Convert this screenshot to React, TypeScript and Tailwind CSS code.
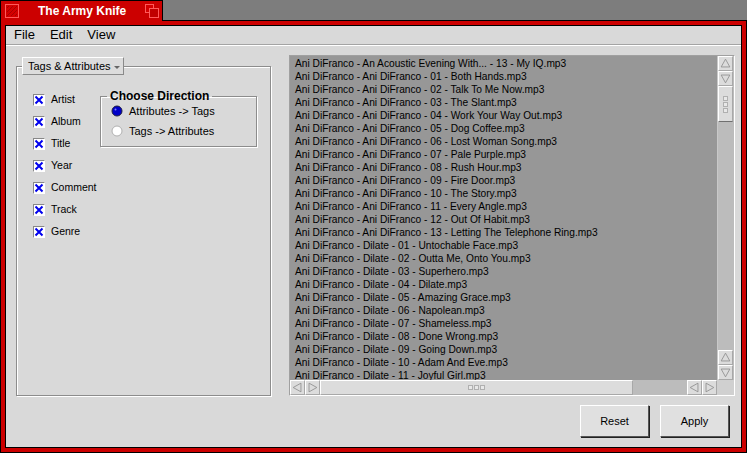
const tracks = [
  "Ani DiFranco - An Acoustic Evening With... - 13 - My IQ.mp3",
  "Ani DiFranco - Ani DiFranco - 01 - Both Hands.mp3",
  "Ani DiFranco - Ani DiFranco - 02 - Talk To Me Now.mp3",
  "Ani DiFranco - Ani DiFranco - 03 - The Slant.mp3",
  "Ani DiFranco - Ani DiFranco - 04 - Work Your Way Out.mp3",
  "Ani DiFranco - Ani DiFranco - 05 - Dog Coffee.mp3",
  "Ani DiFranco - Ani DiFranco - 06 - Lost Woman Song.mp3",
  "Ani DiFranco - Ani DiFranco - 07 - Pale Purple.mp3",
  "Ani DiFranco - Ani DiFranco - 08 - Rush Hour.mp3",
  "Ani DiFranco - Ani DiFranco - 09 - Fire Door.mp3",
  "Ani DiFranco - Ani DiFranco - 10 - The Story.mp3",
  "Ani DiFranco - Ani DiFranco - 11 - Every Angle.mp3",
  "Ani DiFranco - Ani DiFranco - 12 - Out Of Habit.mp3",
  "Ani DiFranco - Ani DiFranco - 13 - Letting The Telephone Ring.mp3",
  "Ani DiFranco - Dilate - 01 - Untochable Face.mp3",
  "Ani DiFranco - Dilate - 02 - Outta Me, Onto You.mp3",
  "Ani DiFranco - Dilate - 03 - Superhero.mp3",
  "Ani DiFranco - Dilate - 04 - Dilate.mp3",
  "Ani DiFranco - Dilate - 05 - Amazing Grace.mp3",
  "Ani DiFranco - Dilate - 06 - Napolean.mp3",
  "Ani DiFranco - Dilate - 07 - Shameless.mp3",
  "Ani DiFranco - Dilate - 08 - Done Wrong.mp3",
  "Ani DiFranco - Dilate - 09 - Going Down.mp3",
  "Ani DiFranco - Dilate - 10 - Adam And Eve.mp3",
  "Ani DiFranco - Dilate - 11 - Joyful Girl.mp3",
];

const fields = ["Artist", "Album", "Title", "Year", "Comment", "Track", "Genre"];

function CloseBox() {
  return (
    <svg width="14" height="14" viewBox="0 0 14 14">
      <rect x="0.5" y="0.5" width="13" height="13" fill="#d40000" stroke="#ff5a5a" />
      <path d="M2 12 L12 2 M2 8 L8 2 M6 12 L12 6 M2 4 L4 2 M10 12 L12 10" stroke="#a80000" strokeWidth="1" />
    </svg>
  );
}

function ZoomBox() {
  return (
    <svg width="14" height="14" viewBox="0 0 14 14">
      <rect x="0.5" y="0.5" width="8" height="8" fill="#d40000" stroke="#ff5a5a" />
      <rect x="4.5" y="4.5" width="9" height="9" fill="#c00000" stroke="#ff5a5a" />
    </svg>
  );
}

function Arrow({ dir }: { dir: "up" | "down" | "left" | "right" }) {
  const pts = {
    up: "7.5,2.5 2.5,11.5 12.5,11.5",
    down: "2.5,3.5 12.5,3.5 7.5,12.5",
    left: "2.5,7.5 11.5,2.5 11.5,12.5",
    right: "3.5,2.5 3.5,12.5 12.5,7.5",
  }[dir];
  return (
    <div className="flex h-[15px] w-[15px] items-center justify-center border border-t-white border-l-white border-r-[#a8a8a8] border-b-[#a8a8a8] bg-[#dcdcdc]">
      <svg width="15" height="15" viewBox="0 0 15 15">
        <polygon points={pts} fill="none" stroke="#909090" />
      </svg>
    </div>
  );
}

function Grip({ vertical }: { vertical?: boolean }) {
  return (
    <div className={vertical ? "flex flex-col gap-[1px]" : "flex gap-[1px]"}>
      {[0, 1, 2].map((i) => (
        <div key={i} className="h-[5px] w-[5px] border border-[#b0b0b0] bg-[#e8e8e8]" />
      ))}
    </div>
  );
}

function Check() {
  return (
    <div className="h-[12px] w-[12px] border border-t-[#888] border-l-[#888] border-r-white border-b-white bg-white">
      <svg width="10" height="10" viewBox="0 0 10 10">
        <path d="M1.5 1.5 L8.5 8.5 M8.5 1.5 L1.5 8.5" stroke="#0000ee" strokeWidth="2" />
      </svg>
    </div>
  );
}

function Radio({ on }: { on?: boolean }) {
  return (
    <svg width="12" height="12" viewBox="0 0 12 12">
      <circle cx="6" cy="6" r="5" fill={on ? "#0000c8" : "#ffffff"} stroke={on ? "#202040" : "#b0b0b0"} />
      {on && <circle cx="4.5" cy="4.5" r="1" fill="#8080ff" />}
    </svg>
  );
}

export default function App() {
  return (
    <div className="flex h-[453px] w-[747px] flex-col bg-[#7d7d7d] font-['Liberation_Sans',Arial,sans-serif] text-black">
      {/* title tab */}
      <div className="relative z-10 -mb-[1px] flex h-[21px] w-[163px] items-center border-l border-r border-t border-black bg-[#cc0000] pl-[4px] pr-[3px]">
        <CloseBox />
        <span className="ml-[19px] text-[12px] font-bold leading-none text-white">The Army Knife</span>
        <div className="ml-auto">
          <ZoomBox />
        </div>
      </div>

      {/* window frame */}
      <div className="flex flex-1 flex-col border border-black bg-[#cc0000] p-[4px]">
        <div className="flex flex-1 flex-col border border-black bg-[#d9d9d9]">
          {/* menu bar */}
          <div className="flex h-[19px] items-center gap-[15px] border-b border-[#a4a4a4] pl-[8px] text-[13px]">
            <span>File</span>
            <span>Edit</span>
            <span>View</span>
          </div>

          <div className="flex flex-1 flex-col border-t border-white pr-[6px] pt-[9px]">
            <div className="flex">
              {/* left panel */}
              <fieldset className="ml-[10px] mt-[2px] h-[339px] w-[255px] border border-[#8c8c8c] shadow-[inset_1px_1px_0_white,1px_1px_0_white]">
                <legend className="ml-[5px]">
                  <div className="flex h-[18px] w-[102px] items-center border border-t-white border-l-white border-r-[#8a8a8a] border-b-[#8a8a8a] bg-[#dcdcdc] pl-[5px] text-[11px]">
                    Tags &amp; Attributes
                    <svg width="6" height="4" viewBox="0 0 6 4" className="ml-[3px] mt-[3px]">
                      <polygon points="0,0 6,0 3,3" fill="#666" />
                    </svg>
                  </div>
                </legend>
                <div className="flex pl-[16px] pt-[19px]">
                  <div className="flex w-[67px] flex-col gap-[10px]">
                    {fields.map((f) => (
                      <div key={f} className="flex h-[12px] items-center gap-[6px] text-[10.5px]">
                        <Check />
                        <span>{f}</span>
                      </div>
                    ))}
                  </div>
                  <fieldset className="-mt-[5px] h-[58px] w-[157px] border border-[#8c8c8c] shadow-[inset_1px_1px_0_white,1px_1px_0_white]">
                    <legend className="ml-[6px] px-[3px] text-[12px] font-bold leading-[14px]">Choose Direction</legend>
                    <div className="flex flex-col gap-[8px] pl-[10px] pt-[2px] text-[11px]">
                      <div className="flex h-[12px] items-center gap-[6px]">
                        <Radio on />
                        <span>Attributes -&gt; Tags</span>
                      </div>
                      <div className="flex h-[12px] items-center gap-[6px]">
                        <Radio />
                        <span>Tags -&gt; Attributes</span>
                      </div>
                    </div>
                  </fieldset>
                </div>
              </fieldset>

              {/* file list */}
              <div className="ml-auto flex h-[341px] w-[446px] flex-col border border-t-[#a0a0a0] border-l-[#a0a0a0] border-r-white border-b-white">
                <div className="flex flex-1 overflow-hidden">
                  <div className="flex-1 overflow-hidden bg-[#979797] pl-[5px] pt-[1px]">
                    {tracks.map((t) => (
                      <div key={t} className="h-[13px] whitespace-nowrap text-[10.2px] leading-[13px]">
                        {t}
                      </div>
                    ))}
                  </div>
                  <div className="flex w-[17px] flex-col border-l border-[#c8c8c8] bg-[#bcbcbc]">
                    <Arrow dir="up" />
                    <Arrow dir="down" />
                    <div className="flex h-[36px] w-[15px] items-center justify-center border border-t-white border-l-white border-r-[#a8a8a8] border-b-[#707070] bg-[#dcdcdc]">
                      <Grip vertical />
                    </div>
                    <div className="flex-1" />
                    <Arrow dir="up" />
                    <Arrow dir="down" />
                  </div>
                </div>
                <div className="flex h-[15px] bg-[#bcbcbc]">
                  <Arrow dir="left" />
                  <Arrow dir="right" />
                  <div className="flex w-[313px] items-center justify-center border border-t-white border-l-white border-r-[#a8a8a8] border-b-[#a8a8a8] bg-[#dcdcdc]">
                    <Grip />
                  </div>
                  <div className="flex-1" />
                  <Arrow dir="left" />
                  <Arrow dir="right" />
                  <div className="w-[17px] bg-[#d0d0d0]" />
                </div>
              </div>
            </div>

            {/* buttons */}
            <div className="mr-[6px] mt-[9px] flex justify-end gap-[11px]">
              <button className="h-[32px] w-[69px] border border-t-white border-l-white border-r-[#555] border-b-[#555] bg-[#e0e0e0] text-[11px] shadow-[1px_1px_0_#222]">
                Reset
              </button>
              <button className="h-[32px] w-[69px] border border-t-white border-l-white border-r-[#555] border-b-[#555] bg-[#e0e0e0] text-[11px] shadow-[1px_1px_0_#222]">
                Apply
              </button>
            </div>
          </div>
        </div>
      </div>
    </div>
  );
}
